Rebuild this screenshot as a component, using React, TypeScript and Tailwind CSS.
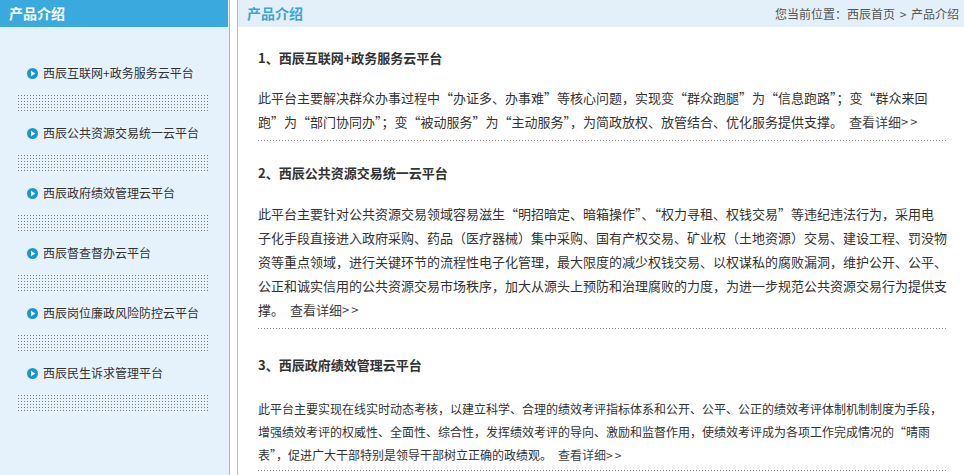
const menu = [
  "西辰互联网+政务服务云平台",
  "西辰公共资源交易统一云平台",
  "西辰政府绩效管理云平台",
  "西辰督查督办云平台",
  "西辰岗位廉政风险防控云平台",
  "西辰民生诉求管理平台",
];

const sections = [
  {
    title: "1、西辰互联网+政务服务云平台",
    lines: [
      "此平台主要解决群众办事过程中“办证多、办事难”等核心问题，实现变“群众跑腿”为“信息跑路”；变“群众来回",
      "跑”为“部门协同办”；变“被动服务”为“主动服务”，为简政放权、放管结合、优化服务提供支撑。",
    ],
    wrap: "pt-[21px] pb-[6px]",
    body: "mt-[18px] text-[13px] leading-6",
  },
  {
    title: "2、西辰公共资源交易统一云平台",
    lines: [
      "此平台主要针对公共资源交易领域容易滋生“明招暗定、暗箱操作”、“权力寻租、权钱交易”等违纪违法行为，采用电",
      "子化手段直接进入政府采购、药品（医疗器械）集中采购、国有产权交易、矿业权（土地资源）交易、建设工程、罚没物",
      "资等重点领域，进行关键环节的流程性电子化管理，最大限度的减少权钱交易、以权谋私的腐败漏洞，维护公开、公平、",
      "公正和诚实信用的公共资源交易市场秩序，加大从源头上预防和治理腐败的力度，为进一步规范公共资源交易行为提供支",
      "撑。",
    ],
    wrap: "pt-[22px] pb-[6px]",
    body: "mt-[19px] text-[13px] leading-6",
  },
  {
    title: "3、西辰政府绩效管理云平台",
    lines: [
      "此平台主要实现在线实时动态考核，以建立科学、合理的绩效考评指标体系和公开、公平、公正的绩效考评体制机制制度为手段，",
      "增强绩效考评的权威性、全面性、综合性，发挥绩效考评的导向、激励和监督作用，使绩效考评成为各项工作完成情况的“晴雨",
      "表”，促进广大干部特别是领导干部树立正确的政绩观。",
    ],
    wrap: "pt-[26px] pb-[4px]",
    body: "mt-[22px] text-[12px] leading-[23px]",
  },
];

function PlayIcon() {
  return (
    <svg width="11" height="11" viewBox="0 0 11 11" className="shrink-0">
      <circle cx="5.5" cy="5.5" r="5.5" fill="#1b96cd" />
      <polygon points="4,2.8 8.2,5.5 4,8.2" fill="#ffffff" />
    </svg>
  );
}

export default function App() {
  return (
    <div className="flex min-h-screen bg-white font-['Noto_Sans_CJK_SC','Liberation_Sans',sans-serif] text-[#333]">
      {/* left menu */}
      <div className="w-[230px] shrink-0 border-r border-[#8fc3e7] bg-[#e6f2fb] pr-px">
        <div className="h-[27px] bg-[#39a9de] pl-[9px] text-[14px] font-bold leading-[27px] text-white">
          产品介绍
        </div>
        <ul className="pt-9">
          {menu.map((item) => (
            <li key={item}>
              <div className="flex h-5 items-center gap-[5px] pl-[27px] text-[12px] text-[#333]">
                <PlayIcon />
                <span>{item}</span>
              </div>
              <div className="mb-3 ml-4 mt-[10px] h-[18px] w-[193px] bg-[linear-gradient(to_right,#e6f2fb_2px,transparent_2px),linear-gradient(to_bottom,#e6f2fb_2px,#7d7d7d_2px)] bg-[length:3px_3px] bg-size-[3px_3px]" />
            </li>
          ))}
        </ul>
      </div>

      {/* content */}
      <div className="ml-[7px] flex-1 border-l border-[#8fc3e7]">
        <div className="flex h-[27px] items-center justify-between bg-[#e3f0fa] pl-[9px] pr-2">
          <span className="text-[14px] font-bold text-[#3aa4dc]">产品介绍</span>
          <span className="text-[12px] text-[#555]">
            您当前位置：西辰首页 <span className="mx-0.5">&gt;</span> 产品介绍
          </span>
        </div>
        <div className="px-5">
          {sections.map((s) => (
            <div key={s.title}>
              <div className={s.wrap}>
                <h3 className="text-[13px] font-bold leading-5 text-[#333]">
                  {s.title}
                </h3>
                <div className={s.body}>
                  {s.lines.map((line, i) => (
                    <div key={i} className="whitespace-nowrap">
                      <span className="[font-feature-settings:'fwid']">{line}</span>
                      {i == s.lines.length - 1 ? (
                        <a href="#" className="ml-1.5 text-[#444]">
                          查看详细<span className="tracking-[2px]">&gt;&gt;</span>
                        </a>
                      ) : null}
                    </div>
                  ))}
                </div>
              </div>
              <div className="h-px bg-[linear-gradient(to_right,#888_1px,transparent_1px)] bg-[length:3px_1px] bg-size-[3px_1px]" />
            </div>
          ))}
        </div>
      </div>
    </div>
  );
}
